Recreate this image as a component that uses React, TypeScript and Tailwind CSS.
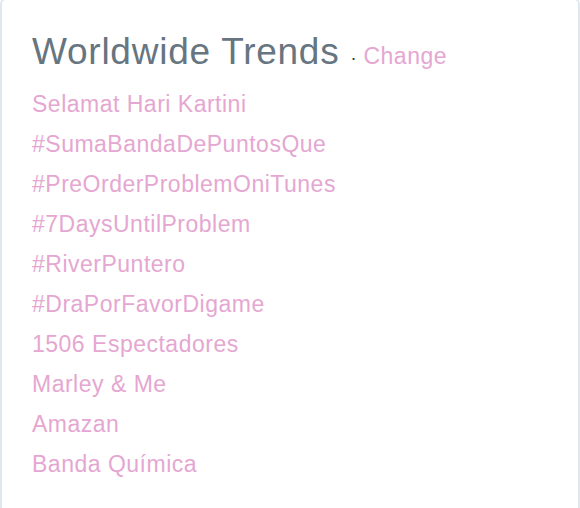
import React from 'react';

const trends: string[] = [
  'Selamat Hari Kartini',
  '#SumaBandaDePuntosQue',
  '#PreOrderProblemOniTunes',
  '#7DaysUntilProblem',
  '#RiverPuntero',
  '#DraPorFavorDigame',
  '1506 Espectadores',
  'Marley & Me',
  'Amazan',
  'Banda Química',
];

export default function App() {
  return (
    <div className="w-[580px] h-[508px] overflow-hidden bg-white font-['Liberation_Sans',Arial,sans-serif]">
      <div className="-mt-[2px] h-[560px] border-2 border-[#e1e8ed] rounded-[6px] bg-white pl-[30px] pt-[34px]">
        <div className="flex items-baseline leading-none">
          <h2 className="text-[37px] leading-[36px] tracking-[0.75px] text-[#66757f] font-normal">Worldwide Trends</h2>
          <span className="ml-[11px] text-[18px] text-[#292f33]">·</span>
          <a className="ml-[7px] text-[23px] tracking-[0.5px] text-[#e5a7d1]">Change</a>
        </div>
        <ul className="mt-[14px]">
          {trends.map((t) => (
            <li key={t} className="h-[40px] text-[23px] leading-[40px] tracking-[0.5px] text-[#e5a7d1]">
              {t}
            </li>
          ))}
        </ul>
      </div>
    </div>
  );
}
